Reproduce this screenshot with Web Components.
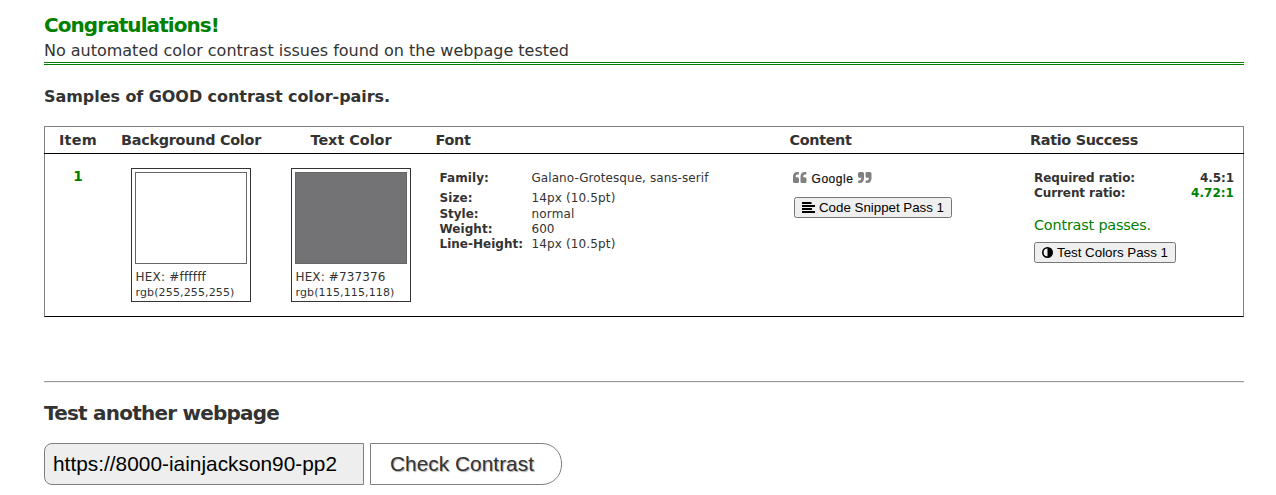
<!DOCTYPE html>
<html lang="en">
<head>
<meta charset="utf-8">
<title>Color contrast results</title>
<style>
body { margin: 0; background: #fff; color: #333; font-family: "DejaVu Sans", sans-serif; overflow: hidden; }
</style>
</head>
<body>
<contrast-page></contrast-page>
<script>
function define(name, html, extra) {
  const t = document.createElement('template');
  t.innerHTML = html;
  customElements.define(name, class extends HTMLElement {
    constructor() {
      super();
      this.attachShadow({ mode: 'open' }).append(t.content.cloneNode(true));
    }
    connectedCallback() { if (extra) extra(this, this.shadowRoot); }
  });
}

/* Spreads its text over the given width with letter-spacing. */
define('fit-text', `<style>:host{display:inline-block;white-space:pre}span{display:inline-block}</style><span><slot></slot></span>`, (el, root) => {
  const span = root.querySelector('span');
  const w = +el.getAttribute('w');
  const n = el.textContent.length;
  const natural = span.getBoundingClientRect().width;
  el.style.width = w + 'px';
  el.style.letterSpacing = (w - natural) / n + 'px';
});

define('result-banner', `<style>
:host{display:block;height:53px;border-bottom:3px double green;box-sizing:border-box}
h2{margin:0;font-size:20px;line-height:26px;color:green}
p{margin:0;font-size:16px;line-height:26px}
</style><h2><fit-text w="175">Congratulations!</fit-text></h2><p><fit-text w="525">No automated color contrast issues found on the webpage tested</fit-text></p>`);

define('color-swatch', `<style>
:host{display:block;box-sizing:border-box;width:120px;height:134px;border:1px solid #333;padding:3px}
i{display:block;box-sizing:border-box;height:92px;width:112px;border:1px solid #666}
div{font-size:12px;line-height:16px;padding-left:.5px}
div:first-of-type{padding-top:5px;height:16px}
div+div{font-size:11px}
</style><i></i><div><slot name="hex"></slot></div><div><slot name="rgb"></slot></div>`, (el, root) => {
  root.querySelector('i').style.background = el.getAttribute('color');
});

define('small-button', `<style>
:host{display:block}
button{display:flex;align-items:center;box-sizing:border-box;height:21px;width:var(--w);padding:0 0 0 7px;border:1px solid #767676;border-radius:2.5px;background:#efefef;color:#000;font:13.33px/19px "Liberation Sans",Arial,sans-serif}
::slotted(svg){flex:none;margin-right:4px}
</style><button><slot name="icon"></slot><slot></slot></button>`);

define('result-table', `<style>
:host{display:block;box-sizing:border-box;width:1200px;height:191px;border:1px solid #808080;border-bottom-color:#000}
.head,.row{display:grid;grid-template-columns:66px 160px 160px 354px 241px 217px}
.head{margin:0 -1px;padding:0 1px;height:26px;border-bottom:1px solid #000;font-weight:bold;font-size:14.4px;line-height:26px}
.c{text-align:center}
.head .f,.head .k,.head .r{padding-left:4.5px}
.head .r{padding-left:4px}
.row{height:162px;font-size:12px}
.num{color:green;font-weight:bold;font-size:13.6px;line-height:18px;padding-top:13px}
.sw{padding:14px 0 0 20px}
dl{margin:0;display:grid;grid-template-columns:92px 1fr;grid-template-rows:20px 16px 15px 15px 16px;line-height:16px;padding:16px 0 0 8.5px}
dl>*{margin:0}
dt{font-weight:bold}
.content{padding:15px 0 0 8px}
.quote{display:flex;align-items:center;height:20px;font:12px/20px "Liberation Sans",Arial,sans-serif;-webkit-text-stroke:.2px;color:#111}
.quote svg{display:block;flex:none;margin-top:-2px}
.quote fit-text{margin:0 4px 0 4.5px}
.content small-button{margin:8px 0 0 1px}
.ratio{padding:15px 9px 0 8px;box-sizing:border-box}
.pair{display:flex;justify-content:space-between;font-weight:bold;line-height:18px;height:15px}
.green{color:green}
.pass{font-size:14.4px;line-height:20px;margin:16px 0 7px;color:green}
</style>
<div class="head"><div class="c"><fit-text w="38">Item</fit-text></div><div class="c"><fit-text w="140">Background Color</fit-text></div><div class="c"><fit-text w="81">Text Color</fit-text></div><div class="f"><fit-text w="35">Font</fit-text></div><div class="k"><fit-text w="62">Content</fit-text></div><div class="r"><fit-text w="108">Ratio Success</fit-text></div></div>
<div class="row">
<div class="num c">1</div>
<div class="sw"><color-swatch color="#fff"><fit-text slot="hex" w="70">HEX: #ffffff</fit-text><fit-text slot="rgb" w="99">rgb(255,255,255)</fit-text></color-swatch></div>
<div class="sw"><color-swatch color="#737376"><fit-text slot="hex" w="90">HEX: #737376</fit-text><fit-text slot="rgb" w="99">rgb(115,115,118)</fit-text></color-swatch></div>
<dl><dt><fit-text w="49.5">Family:</fit-text></dt><dd><fit-text w="177">Galano-Grotesque, sans-serif</fit-text></dd>
<dt><fit-text w="33">Size:</fit-text></dt><dd><fit-text w="84">14px (10.5pt)</fit-text></dd>
<dt><fit-text w="39">Style:</fit-text></dt><dd><fit-text w="43">normal</fit-text></dd>
<dt><fit-text w="53">Weight:</fit-text></dt><dd><fit-text w="23">600</fit-text></dd>
<dt><fit-text w="83.5">Line-Height:</fit-text></dt><dd><fit-text w="84">14px (10.5pt)</fit-text></dd></dl>
<div class="content">
<div class="quote"><svg width="14" height="12" viewBox="0 0 14 12" fill="#808080"><path d="M5.8 0H4.4Q0 0 0 4.8V9.5Q0 11 1.5 11H4.5Q6 11 6 9.5V6.8Q6 5.3 4.5 5.3H2.7V4.5Q2.7 2.5 4.4 2.5H5.8Z"/><path d="M13.3 0H11.9Q7.5 0 7.5 4.8V9.5Q7.5 11 9 11H12Q13.5 11 13.5 9.5V6.8Q13.5 5.3 12 5.3H10.2V4.5Q10.2 2.5 11.9 2.5H13.3Z"/></svg><fit-text w="42">Google</fit-text><svg width="14" height="12" viewBox="0 0 14 12" fill="#808080"><g transform="rotate(180 6.75 5.5)"><path d="M5.8 0H4.4Q0 0 0 4.8V9.5Q0 11 1.5 11H4.5Q6 11 6 9.5V6.8Q6 5.3 4.5 5.3H2.7V4.5Q2.7 2.5 4.4 2.5H5.8Z"/><path d="M13.3 0H11.9Q7.5 0 7.5 4.8V9.5Q7.5 11 9 11H12Q13.5 11 13.5 9.5V6.8Q13.5 5.3 12 5.3H10.2V4.5Q10.2 2.5 11.9 2.5H13.3Z"/></g></svg></div>
<small-button style="--w:158px"><svg slot="icon" width="13" height="11" viewBox="0 0 13 11"><path d="M0 1h9.5M0 4h13M0 7h10M0 10h13" stroke="#000" stroke-width="1.9"/></svg><fit-text w="125">Code Snippet Pass 1</fit-text></small-button>
</div>
<div class="ratio"><div class="pair"><fit-text w="101">Required ratio:</fit-text><fit-text w="34">4.5:1</fit-text></div><div class="pair"><fit-text w="91.5">Current ratio:</fit-text><fit-text class="green" w="43">4.72:1</fit-text></div>
<div class="pass"><fit-text w="117">Contrast passes.</fit-text></div>
<small-button style="--w:142px"><svg slot="icon" width="11" height="11" viewBox="0 0 11 11"><circle cx="5.5" cy="5.5" r="4.7" fill="none" stroke="#000" stroke-width="1.6"/><path d="M5.5 .8a4.7 4.7 0 0 1 0 9.4Z"/></svg><fit-text w="111">Test Colors Pass 1</fit-text></small-button></div>
</div>`);

define('url-form', `<style>
:host{display:flex;gap:6px;font:20.8px/40px "Liberation Sans",Arial,sans-serif}
.url,button{box-sizing:border-box;height:42px;border:1px solid #808080}
.url{width:320px;padding-left:8px;background:#eee;color:#000;border-radius:8px 0 0 8px}
button{width:192px;padding:0 0 0 19px;text-align:left;background:#fff;border-radius:0 20px 20px 0;font:inherit;color:#333;text-shadow:1px 1px 1px #aaa}
</style><div class="url"><fit-text w="284">https://8000-iainjackson90-pp2</fit-text></div><button><fit-text w="144">Check Contrast</fit-text></button>`);

define('contrast-page', `<style>
:host{display:block;box-sizing:border-box;width:1276px;height:495px;padding:12px 32px 0 44px}
result-banner{width:1200px}
h3{margin:20px 0 17px;font-size:16px;line-height:24px}
hr{width:1200px;box-sizing:border-box;margin:64px 0 17px;border:0;border-top:1px solid #9a9a9a;border-bottom:1px solid #eee;height:2px}
h2{margin:0 0 17px;font-size:20px;line-height:26px}
</style><result-banner></result-banner><h3><fit-text w="346">Samples of GOOD contrast color-pairs.</fit-text></h3><result-table></result-table><hr><h2><fit-text w="235">Test another webpage</fit-text></h2><url-form></url-form>`);
</script>
</body>
</html>
